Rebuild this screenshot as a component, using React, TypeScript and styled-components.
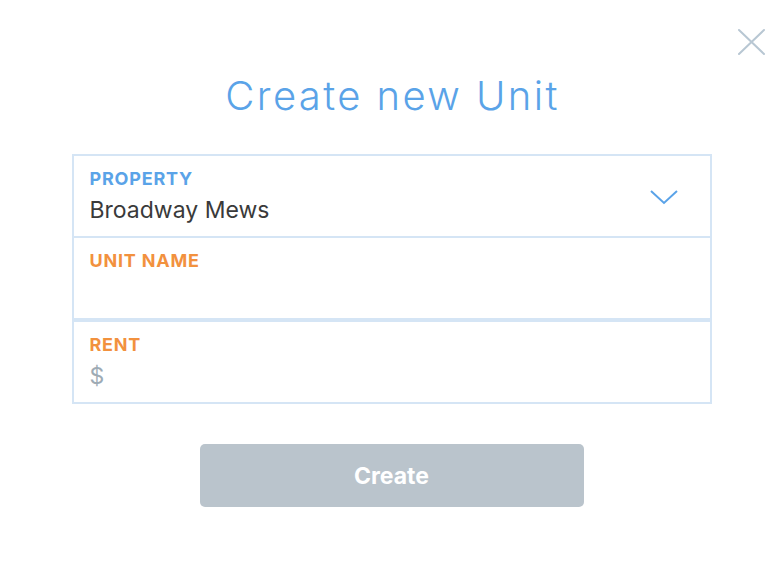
import styled, { createGlobalStyle } from 'styled-components'

const GlobalStyle = createGlobalStyle`
    html, body {
        margin: 0;
        padding: 0;
        background: #ffffff;
    }
    body {
        font-family: Inter, 'Liberation Sans', sans-serif;
    }
`

const Modal = styled.div`
    position: relative;
    width: 778px;
    height: 574px;
    display: flex;
    flex-direction: column;
    align-items: center;
    padding-top: 72px;
    box-sizing: border-box;
`

const CloseButton = styled.button`
    position: absolute;
    top: 27px;
    right: 12px;
    width: 30px;
    height: 30px;
    padding: 0;
    border: none;
    background: none;
    cursor: pointer;
`

const Title = styled.h1`
    margin: 0 0 0 7px;
    font-family: Inter, 'Liberation Sans', sans-serif;
    font-weight: 300;
    font-size: 40px;
    line-height: 48px;
    letter-spacing: 2.4px;
    color: #5aa3e8;
`

const FieldBox = styled.div`
    margin-top: 34px;
    margin-left: 5px;
    width: 640px;
    border: 2px solid #d5e5f5;
    box-sizing: border-box;
`

const Field = styled.label<{ $split?: boolean }>`
    position: relative;
    display: flex;
    flex-direction: column;
    height: 68px;
    padding: 12px 16px 0;
    border-top: ${(p) => (p.$split ? '4px' : '2px')} solid #d5e5f5;

    &:first-child {
        border-top: none;
    }
`

const Label = styled.span<{ $color: string }>`
    font-size: 18px;
    font-weight: 700;
    line-height: 22px;
    letter-spacing: 0.8px;
    text-transform: uppercase;
    color: ${(p) => p.$color};
`

const Value = styled.span<{ $muted?: boolean }>`
    margin-top: 6px;
    font-size: 23px;
    line-height: 28px;
    color: ${(p) => (p.$muted ? '#9eabb5' : '#3a3a3a')};
`

const Chevron = styled.svg`
    position: absolute;
    right: 31px;
    top: 33px;
`

const Submit = styled.button`
    margin-top: 40px;
    margin-left: 5px;
    width: 384px;
    height: 63px;
    border: none;
    border-radius: 5px;
    background: #bac4cc;
    color: #ffffff;
    font-family: Inter, 'Liberation Sans', sans-serif;
    font-size: 23px;
    font-weight: 700;
    cursor: pointer;
`

export default function App() {
    return (
        <>
            <GlobalStyle />
            <Modal>
                <CloseButton aria-label='Close'>
                    <svg width='30' height='30' viewBox='0 0 30 30'>
                        <path d='M3 3 L28 27 M28 3 L3 27' stroke='#b8c7d3' strokeWidth='2' strokeLinecap='round' />
                    </svg>
                </CloseButton>
                <Title>Create new Unit</Title>
                <FieldBox>
                    <Field>
                        <Label $color='#5aa3e8'>Property</Label>
                        <Value>Broadway Mews</Value>
                        <Chevron width='30' height='16' viewBox='0 0 30 16'>
                            <path d='M2 2 L15 14 L28 2' fill='none' stroke='#5aa3e8' strokeWidth='2' />
                        </Chevron>
                    </Field>
                    <Field>
                        <Label $color='#f2913e'>Unit name</Label>
                    </Field>
                    <Field $split>
                        <Label $color='#f2913e'>Rent</Label>
                        <Value $muted>$</Value>
                    </Field>
                </FieldBox>
                <Submit>Create</Submit>
            </Modal>
        </>
    )
}
